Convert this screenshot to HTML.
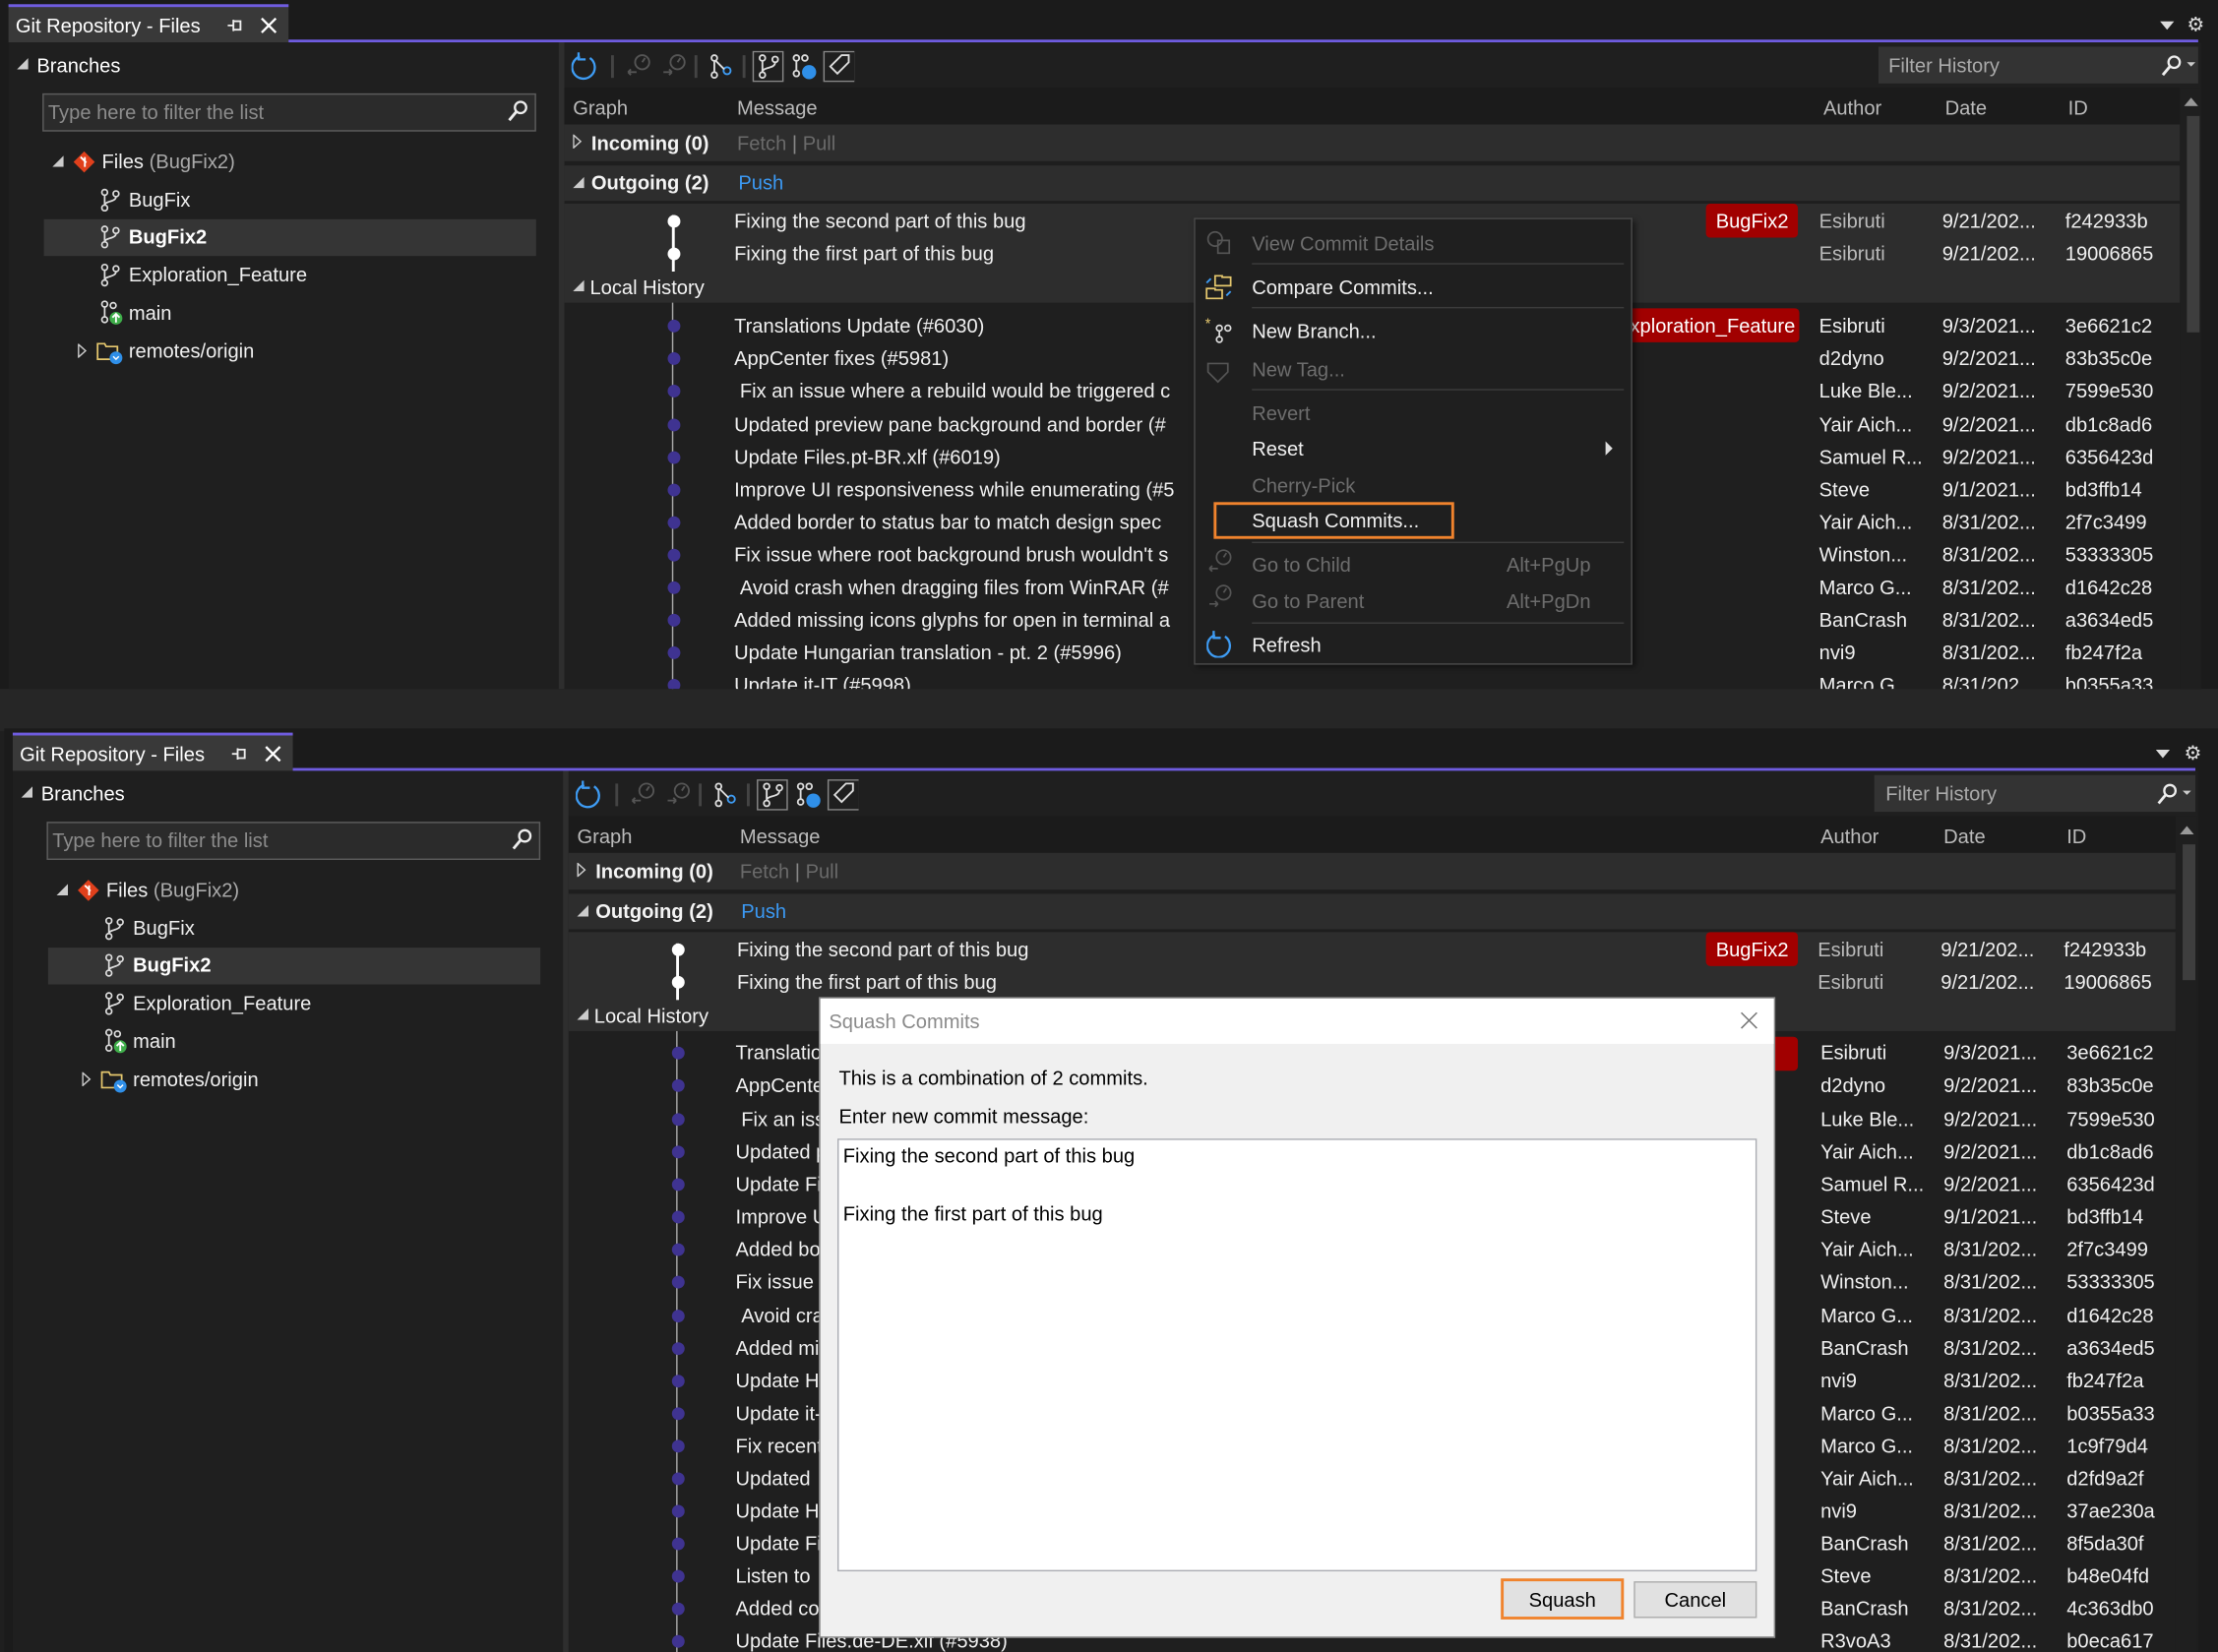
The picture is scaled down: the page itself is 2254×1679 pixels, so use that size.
<!DOCTYPE html>
<html><head><meta charset="utf-8"><style>
*{margin:0;padding:0;box-sizing:border-box}
html,body{width:2254px;height:1678px;overflow:hidden;background:#1f1f1f}
#s{position:absolute;left:0;top:0;width:1568px;height:1168px;transform:scale(1.4375);transform-origin:0 0;font-family:"Liberation Sans",sans-serif;font-size:14px;color:#f0f0f0}
.p{position:absolute;left:0;width:1568px;overflow:hidden;background:#1b1b1b}
.a{position:absolute;white-space:nowrap;line-height:18px}
.bx{position:absolute}
.r{position:absolute;left:0;width:1540px;height:18px}
.r span{position:absolute;white-space:nowrap;line-height:18px;top:0}
.m{left:519px}.au{left:1286px}.d{left:1373px}.i{left:1460px}
.dot{position:absolute;left:472px;width:9px;height:9px;border-radius:50%;background:#3f3391}
.dis{color:#6f6f6f}
svg{position:absolute}
</style></head><body><div id="s">

<div class="bx" style="left:0;top:487px;width:1568px;height:30px;background:#262626"></div>

<!-- ===== TOP PANEL ===== -->
<div class="p" style="top:0;height:487px">
 <div class="bx" style="left:6px;top:3px;width:198px;height:27px;background:#393939;border-top:2px solid #6f5ce0"></div>
 <div class="a" style="left:11px;top:9px;color:#fff">Git Repository - Files</div>
 <svg style="left:160px;top:12px" width="12" height="12" viewBox="0 0 12 12"><path d="M1 6h4M5 2v8M5 3h5v6H5" stroke="#eee" stroke-width="1.3" fill="none"/></svg>
 <svg style="left:184px;top:12px" width="12" height="12" viewBox="0 0 12 12"><path d="M1 1l10 10M11 1L1 11" stroke="#fff" stroke-width="1.6"/></svg>
 <div class="bx" style="left:204px;top:28px;width:1350px;height:2px;background:#6f5ce0"></div>
 <svg style="left:1527px;top:15px" width="10" height="6"><path d="M0 0h10L5 6z" fill="#ddd"/></svg>
 <div class="a" style="left:1546px;top:8px;font-size:14px;color:#ddd">⚙</div>

 <div class="bx" style="left:6px;top:30px;width:389px;height:460px;background:#1f1f1f"></div>
 <div class="bx" style="left:395px;top:30px;width:4px;height:460px;background:#2e2e2e"></div>
 <svg style="left:12px;top:41px" width="8" height="8"><path d="M8 0v8H0z" fill="#ccc"/></svg>
 <div class="a" style="left:26px;top:37px;color:#fff">Branches</div>
 <div class="bx" style="left:30px;top:66px;width:349px;height:27px;background:#2b2b2b;border:1px solid #5c5c5c"></div>
 <div class="a" style="left:34px;top:70px;color:#8c8c8c">Type here to filter the list</div>
 <svg style="left:358px;top:70px" width="16" height="17" viewBox="0 0 16 17"><circle cx="10" cy="6" r="4" stroke="#eee" stroke-width="1.6" fill="none"/><path d="M7 9l-5 6" stroke="#eee" stroke-width="2"/></svg>
 <svg style="left:37px;top:110px" width="8" height="8"><path d="M8 0v8H0z" fill="#ccc"/></svg>
 <svg style="left:51px;top:106px" width="17" height="17" viewBox="0 0 17 17"><path d="M8.5 1l7.5 7.5-7.5 7.5L1 8.5z" fill="#e0401c"/><path d="M6 5l4 4M9 5v7" stroke="#fff" stroke-width="1.3"/></svg>
 <div class="a" style="left:72px;top:105px">Files <span style="color:#aaa">(BugFix2)</span></div>
 <div class="bx" style="left:31px;top:155px;width:348px;height:26px;background:#353535"></div>
 <svg style="left:70px;top:133px" width="16" height="17" viewBox="0 0 16 17"><g stroke="#ddd" stroke-width="1.2" fill="none"><circle cx="4" cy="3" r="2"/><circle cx="4" cy="14" r="2"/><circle cx="12" cy="4" r="2"/><path d="M4 5v7M12 6c0 4-8 3-8 6"/></g></svg>
 <div class="a" style="left:91px;top:132px">BugFix</div>
 <svg style="left:70px;top:159px" width="16" height="17" viewBox="0 0 16 17"><g stroke="#ddd" stroke-width="1.2" fill="none"><circle cx="4" cy="3" r="2"/><circle cx="4" cy="14" r="2"/><circle cx="12" cy="4" r="2"/><path d="M4 5v7M12 6c0 4-8 3-8 6"/></g></svg>
 <div class="a" style="left:91px;top:158px;font-weight:bold;color:#fff">BugFix2</div>
 <svg style="left:70px;top:186px" width="16" height="17" viewBox="0 0 16 17"><g stroke="#ddd" stroke-width="1.2" fill="none"><circle cx="4" cy="3" r="2"/><circle cx="4" cy="14" r="2"/><circle cx="12" cy="4" r="2"/><path d="M4 5v7M12 6c0 4-8 3-8 6"/></g></svg>
 <div class="a" style="left:91px;top:185px">Exploration_Feature</div>
 <svg style="left:70px;top:212px" width="18" height="18" viewBox="0 0 18 18"><g stroke="#ddd" stroke-width="1.2" fill="none"><circle cx="4" cy="3" r="2"/><circle cx="4" cy="14" r="2"/><circle cx="10" cy="4" r="2"/><path d="M4 5v7"/></g><circle cx="12" cy="13" r="4.5" fill="#3fae4a"/><path d="M12 16v-6M9.5 12.5L12 10l2.5 2.5" stroke="#fff" stroke-width="1.3" fill="none"/></svg>
 <div class="a" style="left:91px;top:212px">main</div>
 <svg style="left:55px;top:243px" width="7" height="10"><path d="M0.5 0.5v9l5-4.5z" stroke="#ccc" fill="none"/></svg>
 <svg style="left:68px;top:240px" width="20" height="18" viewBox="0 0 20 18"><path d="M1 3h5l1 2h8v9H1z" stroke="#e6c86e" stroke-width="1.2" fill="none"/><circle cx="14" cy="13" r="4.5" fill="#2f8fe8"/><path d="M12 12l2 2 2-2" stroke="#fff" fill="none"/></svg>
 <div class="a" style="left:91px;top:239px">remotes/origin</div>

 <div class="bx" style="left:399px;top:30px;width:1157px;height:460px;background:#1f1f1f"></div>
 <svg style="left:404px;top:36px" width="200" height="22" viewBox="0 0 200 22">
  <path d="M6 4a8 8 0 1 0 7 1" stroke="#3e9cf4" stroke-width="1.6" fill="none"/><path d="M5 1v5h5" stroke="#3e9cf4" stroke-width="1.6" fill="none"/>
  <path d="M29 3v16" stroke="#444" stroke-width="2"/>
  <g stroke="#555" stroke-width="1.3" fill="none"><circle cx="50" cy="8" r="5"/><path d="M50 8l2-3M40 15h6M40 15l2-2M40 15l2 2"/><circle cx="75" cy="8" r="5"/><path d="M75 8l2-3M65 15h6M71 15l-2-2M71 15l-2 2"/></g>
  <path d="M88 3v16" stroke="#444" stroke-width="2"/>
  <g stroke="#ddd" stroke-width="1.3" fill="none"><circle cx="101" cy="5" r="2"/><circle cx="101" cy="17" r="2"/><circle cx="110" cy="14" r="2.5" stroke="#3e9cf4"/><path d="M101 7v8M102 7l6 6"/></g>
  <path d="M122 3v16" stroke="#444" stroke-width="2"/>
  <rect x="128.5" y="0.5" width="21" height="21" stroke="#888" fill="none"/>
  <g stroke="#ddd" stroke-width="1.3" fill="none"><circle cx="135" cy="5" r="2"/><circle cx="135" cy="17" r="2"/><circle cx="144" cy="6" r="2"/><path d="M135 7v8M144 8c0 5-9 3-9 7"/><circle cx="159" cy="5" r="2"/><circle cx="159" cy="16" r="2"/><circle cx="165" cy="5" r="2"/><path d="M159 7v7"/></g>
  <circle cx="168" cy="15" r="5" fill="#2f8fe8"/>
  <rect x="178.5" y="0.5" width="22" height="21" stroke="#888" fill="none"/>
  <path d="M183 11l8-8h5v5l-8 8z" stroke="#ddd" stroke-width="1.3" fill="none"/>
 </svg>
 <div class="bx" style="left:1328px;top:33px;width:226px;height:26px;background:#333"></div>
 <div class="a" style="left:1335px;top:37px;color:#aaa">Filter History</div>
 <svg style="left:1527px;top:38px" width="26" height="16"><circle cx="10" cy="6" r="4" stroke="#eee" stroke-width="1.6" fill="none"/><path d="M7 9l-5 6" stroke="#eee" stroke-width="2"/><path d="M19 6h6l-3 3z" fill="#ccc"/></svg>

 <div class="bx" style="left:399px;top:62px;width:1142px;height:26px;background:#1b1b1b"></div>
 <div class="a" style="left:405px;top:67px;color:#bbb">Graph</div>
 <div class="a" style="left:521px;top:67px;color:#bbb">Message</div>
 <div class="a" style="left:1289px;top:67px;color:#bbb">Author</div>
 <div class="a" style="left:1375px;top:67px;color:#bbb">Date</div>
 <div class="a" style="left:1462px;top:67px;color:#bbb">ID</div>
 <div class="bx" style="left:399px;top:88px;width:1142px;height:126px;background:#2d2d2d"></div>
 <div class="bx" style="left:399px;top:114px;width:1142px;height:3px;background:#1e1e1e"></div>
 <div class="bx" style="left:399px;top:142px;width:1142px;height:2px;background:#1e1e1e"></div>
 <svg style="left:405px;top:95px" width="7" height="10"><path d="M0.5 0.5v9l5-4.5z" stroke="#ccc" fill="none"/></svg>
 <div class="a" style="left:418px;top:92px;font-weight:bold;color:#f4f4f4">Incoming (0)</div>
 <div class="a" style="left:521px;top:92px;color:#6a6a6a">Fetch <span style="color:#888">|</span> Pull</div>
 <svg style="left:405px;top:125px" width="8" height="8"><path d="M8 0v8H0z" fill="#ccc"/></svg>
 <div class="a" style="left:418px;top:120px;font-weight:bold;color:#f4f4f4">Outgoing (2)</div>
 <div class="a" style="left:522px;top:120px;color:#3b99f3">Push</div>
 <div class="bx" style="left:475px;top:152px;width:2px;height:40px;background:#fff"></div>
 <div class="dot" style="left:472px;top:152px;background:#fff"></div>
 <div class="dot" style="left:472px;top:175px;background:#fff"></div>
 <div class="a" style="left:519px;top:147px">Fixing the second part of this bug</div>
 <div class="a" style="left:519px;top:170px">Fixing the first part of this bug</div>
 <div class="bx" style="left:1206px;top:144px;width:65px;height:24px;background:#a10000;border-radius:3px"></div>
 <div class="a" style="left:1213px;top:147px;color:#fff">BugFix2</div>
 <div class="a" style="left:1286px;top:147px;color:#bbb">Esibruti</div><div class="a" style="left:1373px;top:147px">9/21/202...</div><div class="a" style="left:1460px;top:147px">f242933b</div>
 <div class="a" style="left:1286px;top:170px;color:#bbb">Esibruti</div><div class="a" style="left:1373px;top:170px">9/21/202...</div><div class="a" style="left:1460px;top:170px">19006865</div>
 <svg style="left:405px;top:198px" width="8" height="8"><path d="M8 0v8H0z" fill="#ccc"/></svg>
 <div class="a" style="left:417px;top:194px;color:#f4f4f4">Local History</div>

 <div class="bx" style="left:475px;top:214px;width:1px;height:280px;background:#aaa"></div>
 <div class="bx" style="left:1150px;top:218px;width:122px;height:24px;background:#a10000;border-radius:3px;overflow:hidden"><div class="a" style="left:-7px;top:3px;color:#fff">Exploration_Feature</div></div>

 <div class="r" style="top:221px"><span class="m">Translations Update (#6030)</span><span class="au">Esibruti</span><span class="d">9/3/2021...</span><span class="i">3e6621c2</span></div>
 <div class="r" style="top:244px"><span class="m">AppCenter fixes (#5981)</span><span class="au">d2dyno</span><span class="d">9/2/2021...</span><span class="i">83b35c0e</span></div>
 <div class="r" style="top:267px"><span class="m" style="left:523px">Fix an issue where a rebuild would be triggered c</span><span class="au">Luke Ble...</span><span class="d">9/2/2021...</span><span class="i">7599e530</span></div>
 <div class="r" style="top:291px"><span class="m">Updated preview pane background and border (#</span><span class="au">Yair Aich...</span><span class="d">9/2/2021...</span><span class="i">db1c8ad6</span></div>
 <div class="r" style="top:314px"><span class="m">Update Files.pt-BR.xlf (#6019)</span><span class="au">Samuel R...</span><span class="d">9/2/2021...</span><span class="i">6356423d</span></div>
 <div class="r" style="top:337px"><span class="m">Improve UI responsiveness while enumerating (#5</span><span class="au">Steve</span><span class="d">9/1/2021...</span><span class="i">bd3ffb14</span></div>
 <div class="r" style="top:360px"><span class="m">Added border to status bar to match design spec</span><span class="au">Yair Aich...</span><span class="d">8/31/202...</span><span class="i">2f7c3499</span></div>
 <div class="r" style="top:383px"><span class="m">Fix issue where root background brush wouldn't s</span><span class="au">Winston...</span><span class="d">8/31/202...</span><span class="i">53333305</span></div>
 <div class="r" style="top:406px"><span class="m" style="left:523px">Avoid crash when dragging files from WinRAR (#</span><span class="au">Marco G...</span><span class="d">8/31/202...</span><span class="i">d1642c28</span></div>
 <div class="r" style="top:429px"><span class="m">Added missing icons glyphs for open in terminal a</span><span class="au">BanCrash</span><span class="d">8/31/202...</span><span class="i">a3634ed5</span></div>
 <div class="r" style="top:452px"><span class="m">Update Hungarian translation - pt. 2 (#5996)</span><span class="au">nvi9</span><span class="d">8/31/202...</span><span class="i">fb247f2a</span></div>
 <div class="r" style="top:475px"><span class="m">Update it-IT (#5998)</span><span class="au">Marco G...</span><span class="d">8/31/202...</span><span class="i">b0355a33</span></div>
 <div class="dot" style="top:226px"></div><div class="dot" style="top:249px"></div><div class="dot" style="top:272px"></div><div class="dot" style="top:296px"></div><div class="dot" style="top:319px"></div><div class="dot" style="top:342px"></div><div class="dot" style="top:365px"></div><div class="dot" style="top:388px"></div><div class="dot" style="top:411px"></div><div class="dot" style="top:434px"></div><div class="dot" style="top:457px"></div><div class="dot" style="top:480px"></div>

 <div class="bx" style="left:1541px;top:62px;width:15px;height:430px;background:#1f1f1f"></div>
 <svg style="left:1544px;top:69px" width="10" height="6"><path d="M0 6h10L5 0z" fill="#999"/></svg>
 <div class="bx" style="left:1546px;top:82px;width:9px;height:153px;background:#3e3e3e"></div>
</div>

<!-- ===== BOTTOM PANEL ===== -->
<div class="p" style="top:515px;height:653px;left:3px">
 <div class="bx" style="left:6px;top:3px;width:198px;height:27px;background:#393939;border-top:2px solid #6f5ce0"></div>
 <div class="a" style="left:11px;top:9px;color:#fff">Git Repository - Files</div>
 <svg style="left:160px;top:12px" width="12" height="12" viewBox="0 0 12 12"><path d="M1 6h4M5 2v8M5 3h5v6H5" stroke="#eee" stroke-width="1.3" fill="none"/></svg>
 <svg style="left:184px;top:12px" width="12" height="12" viewBox="0 0 12 12"><path d="M1 1l10 10M11 1L1 11" stroke="#fff" stroke-width="1.6"/></svg>
 <div class="bx" style="left:204px;top:28px;width:1345px;height:2px;background:#6f5ce0"></div>
 <svg style="left:1521px;top:15px" width="10" height="6"><path d="M0 0h10L5 6z" fill="#ddd"/></svg>
 <div class="a" style="left:1541px;top:8px;color:#ddd">⚙</div>

 <div class="bx" style="left:6px;top:30px;width:389px;height:630px;background:#1f1f1f"></div>
 <div class="bx" style="left:395px;top:30px;width:4px;height:630px;background:#2e2e2e"></div>
 <svg style="left:12px;top:41px" width="8" height="8"><path d="M8 0v8H0z" fill="#ccc"/></svg>
 <div class="a" style="left:26px;top:37px;color:#fff">Branches</div>
 <div class="bx" style="left:30px;top:66px;width:349px;height:27px;background:#2b2b2b;border:1px solid #5c5c5c"></div>
 <div class="a" style="left:34px;top:70px;color:#8c8c8c">Type here to filter the list</div>
 <svg style="left:358px;top:70px" width="16" height="17" viewBox="0 0 16 17"><circle cx="10" cy="6" r="4" stroke="#eee" stroke-width="1.6" fill="none"/><path d="M7 9l-5 6" stroke="#eee" stroke-width="2"/></svg>
 <svg style="left:37px;top:110px" width="8" height="8"><path d="M8 0v8H0z" fill="#ccc"/></svg>
 <svg style="left:51px;top:106px" width="17" height="17" viewBox="0 0 17 17"><path d="M8.5 1l7.5 7.5-7.5 7.5L1 8.5z" fill="#e0401c"/><path d="M6 5l4 4M9 5v7" stroke="#fff" stroke-width="1.3"/></svg>
 <div class="a" style="left:72px;top:105px">Files <span style="color:#aaa">(BugFix2)</span></div>
 <div class="bx" style="left:31px;top:155px;width:348px;height:26px;background:#353535"></div>
 <svg style="left:70px;top:133px" width="16" height="17" viewBox="0 0 16 17"><g stroke="#ddd" stroke-width="1.2" fill="none"><circle cx="4" cy="3" r="2"/><circle cx="4" cy="14" r="2"/><circle cx="12" cy="4" r="2"/><path d="M4 5v7M12 6c0 4-8 3-8 6"/></g></svg>
 <div class="a" style="left:91px;top:132px">BugFix</div>
 <svg style="left:70px;top:159px" width="16" height="17" viewBox="0 0 16 17"><g stroke="#ddd" stroke-width="1.2" fill="none"><circle cx="4" cy="3" r="2"/><circle cx="4" cy="14" r="2"/><circle cx="12" cy="4" r="2"/><path d="M4 5v7M12 6c0 4-8 3-8 6"/></g></svg>
 <div class="a" style="left:91px;top:158px;font-weight:bold;color:#fff">BugFix2</div>
 <svg style="left:70px;top:186px" width="16" height="17" viewBox="0 0 16 17"><g stroke="#ddd" stroke-width="1.2" fill="none"><circle cx="4" cy="3" r="2"/><circle cx="4" cy="14" r="2"/><circle cx="12" cy="4" r="2"/><path d="M4 5v7M12 6c0 4-8 3-8 6"/></g></svg>
 <div class="a" style="left:91px;top:185px">Exploration_Feature</div>
 <svg style="left:70px;top:212px" width="18" height="18" viewBox="0 0 18 18"><g stroke="#ddd" stroke-width="1.2" fill="none"><circle cx="4" cy="3" r="2"/><circle cx="4" cy="14" r="2"/><circle cx="10" cy="4" r="2"/><path d="M4 5v7"/></g><circle cx="12" cy="13" r="4.5" fill="#3fae4a"/><path d="M12 16v-6M9.5 12.5L12 10l2.5 2.5" stroke="#fff" stroke-width="1.3" fill="none"/></svg>
 <div class="a" style="left:91px;top:212px">main</div>
 <svg style="left:55px;top:243px" width="7" height="10"><path d="M0.5 0.5v9l5-4.5z" stroke="#ccc" fill="none"/></svg>
 <svg style="left:68px;top:240px" width="20" height="18" viewBox="0 0 20 18"><path d="M1 3h5l1 2h8v9H1z" stroke="#e6c86e" stroke-width="1.2" fill="none"/><circle cx="14" cy="13" r="4.5" fill="#2f8fe8"/><path d="M12 12l2 2 2-2" stroke="#fff" fill="none"/></svg>
 <div class="a" style="left:91px;top:239px">remotes/origin</div>

 <div class="bx" style="left:399px;top:30px;width:1152px;height:630px;background:#1f1f1f"></div>
 <svg style="left:404px;top:36px" width="200" height="22" viewBox="0 0 200 22">
  <path d="M6 4a8 8 0 1 0 7 1" stroke="#3e9cf4" stroke-width="1.6" fill="none"/><path d="M5 1v5h5" stroke="#3e9cf4" stroke-width="1.6" fill="none"/>
  <path d="M29 3v16" stroke="#444" stroke-width="2"/>
  <g stroke="#555" stroke-width="1.3" fill="none"><circle cx="50" cy="8" r="5"/><path d="M50 8l2-3M40 15h6M40 15l2-2M40 15l2 2"/><circle cx="75" cy="8" r="5"/><path d="M75 8l2-3M65 15h6M71 15l-2-2M71 15l-2 2"/></g>
  <path d="M88 3v16" stroke="#444" stroke-width="2"/>
  <g stroke="#ddd" stroke-width="1.3" fill="none"><circle cx="101" cy="5" r="2"/><circle cx="101" cy="17" r="2"/><circle cx="110" cy="14" r="2.5" stroke="#3e9cf4"/><path d="M101 7v8M102 7l6 6"/></g>
  <path d="M122 3v16" stroke="#444" stroke-width="2"/>
  <rect x="128.5" y="0.5" width="21" height="21" stroke="#888" fill="none"/>
  <g stroke="#ddd" stroke-width="1.3" fill="none"><circle cx="135" cy="5" r="2"/><circle cx="135" cy="17" r="2"/><circle cx="144" cy="6" r="2"/><path d="M135 7v8M144 8c0 5-9 3-9 7"/><circle cx="159" cy="5" r="2"/><circle cx="159" cy="16" r="2"/><circle cx="165" cy="5" r="2"/><path d="M159 7v7"/></g>
  <circle cx="168" cy="15" r="5" fill="#2f8fe8"/>
  <rect x="178.5" y="0.5" width="22" height="21" stroke="#888" fill="none"/>
  <path d="M183 11l8-8h5v5l-8 8z" stroke="#ddd" stroke-width="1.3" fill="none"/>
 </svg>
 <div class="bx" style="left:1322px;top:33px;width:227px;height:26px;background:#333"></div>
 <div class="a" style="left:1330px;top:37px;color:#aaa">Filter History</div>
 <svg style="left:1521px;top:38px" width="26" height="16"><circle cx="10" cy="6" r="4" stroke="#eee" stroke-width="1.6" fill="none"/><path d="M7 9l-5 6" stroke="#eee" stroke-width="2"/><path d="M19 6h6l-3 3z" fill="#ccc"/></svg>

 <div class="bx" style="left:399px;top:62px;width:1136px;height:26px;background:#1b1b1b"></div>
 <div class="a" style="left:405px;top:67px;color:#bbb">Graph</div>
 <div class="a" style="left:520px;top:67px;color:#bbb">Message</div>
 <div class="a" style="left:1284px;top:67px;color:#bbb">Author</div>
 <div class="a" style="left:1371px;top:67px;color:#bbb">Date</div>
 <div class="a" style="left:1458px;top:67px;color:#bbb">ID</div>
 <div class="bx" style="left:399px;top:88px;width:1136px;height:126px;background:#2d2d2d"></div>
 <div class="bx" style="left:399px;top:114px;width:1136px;height:3px;background:#1e1e1e"></div>
 <div class="bx" style="left:399px;top:142px;width:1136px;height:2px;background:#1e1e1e"></div>
 <svg style="left:405px;top:95px" width="7" height="10"><path d="M0.5 0.5v9l5-4.5z" stroke="#ccc" fill="none"/></svg>
 <div class="a" style="left:418px;top:92px;font-weight:bold;color:#f4f4f4">Incoming (0)</div>
 <div class="a" style="left:520px;top:92px;color:#6a6a6a">Fetch <span style="color:#888">|</span> Pull</div>
 <svg style="left:405px;top:125px" width="8" height="8"><path d="M8 0v8H0z" fill="#ccc"/></svg>
 <div class="a" style="left:418px;top:120px;font-weight:bold;color:#f4f4f4">Outgoing (2)</div>
 <div class="a" style="left:521px;top:120px;color:#3b99f3">Push</div>
 <div class="bx" style="left:475px;top:152px;width:2px;height:40px;background:#fff"></div>
 <div class="dot" style="left:472px;top:152px;background:#fff"></div>
 <div class="dot" style="left:472px;top:175px;background:#fff"></div>
 <div class="a" style="left:518px;top:147px">Fixing the second part of this bug</div>
 <div class="a" style="left:518px;top:170px">Fixing the first part of this bug</div>
 <div class="bx" style="left:1203px;top:144px;width:65px;height:24px;background:#a10000;border-radius:3px"></div>
 <div class="a" style="left:1210px;top:147px;color:#fff">BugFix2</div>
 <div class="a" style="left:1282px;top:147px;color:#bbb">Esibruti</div><div class="a" style="left:1369px;top:147px">9/21/202...</div><div class="a" style="left:1456px;top:147px">f242933b</div>
 <div class="a" style="left:1282px;top:170px;color:#bbb">Esibruti</div><div class="a" style="left:1369px;top:170px">9/21/202...</div><div class="a" style="left:1456px;top:170px">19006865</div>
 <svg style="left:405px;top:198px" width="8" height="8"><path d="M8 0v8H0z" fill="#ccc"/></svg>
 <div class="a" style="left:417px;top:194px;color:#f4f4f4">Local History</div>
 <div class="bx" style="left:475px;top:214px;width:1px;height:440px;background:#aaa"></div>
 <div class="bx" style="left:1150px;top:218px;width:118px;height:24px;background:#a10000;border-radius:3px"></div>
 <div style="position:absolute;left:0;top:0;width:1540px;height:660px;transform:translateX(-2px)">
 <div class="r" style="top:220px"><span class="m">Translations Update (#6030)</span><span class="au">Esibruti</span><span class="d">9/3/2021...</span><span class="i">3e6621c2</span></div>
 <div class="r" style="top:243px"><span class="m">AppCenter fixes (#5981)</span><span class="au">d2dyno</span><span class="d">9/2/2021...</span><span class="i">83b35c0e</span></div>
 <div class="r" style="top:267px"><span class="m" style="left:523px">Fix an issue where a rebuild</span><span class="au">Luke Ble...</span><span class="d">9/2/2021...</span><span class="i">7599e530</span></div>
 <div class="r" style="top:290px"><span class="m">Updated preview pane</span><span class="au">Yair Aich...</span><span class="d">9/2/2021...</span><span class="i">db1c8ad6</span></div>
 <div class="r" style="top:313px"><span class="m">Update Files.pt-BR.xlf</span><span class="au">Samuel R...</span><span class="d">9/2/2021...</span><span class="i">6356423d</span></div>
 <div class="r" style="top:336px"><span class="m">Improve UI</span><span class="au">Steve</span><span class="d">9/1/2021...</span><span class="i">bd3ffb14</span></div>
 <div class="r" style="top:359px"><span class="m">Added border</span><span class="au">Yair Aich...</span><span class="d">8/31/202...</span><span class="i">2f7c3499</span></div>
 <div class="r" style="top:382px"><span class="m">Fix issue where</span><span class="au">Winston...</span><span class="d">8/31/202...</span><span class="i">53333305</span></div>
 <div class="r" style="top:406px"><span class="m" style="left:523px">Avoid crash</span><span class="au">Marco G...</span><span class="d">8/31/202...</span><span class="i">d1642c28</span></div>
 <div class="r" style="top:429px"><span class="m">Added missing</span><span class="au">BanCrash</span><span class="d">8/31/202...</span><span class="i">a3634ed5</span></div>
 <div class="r" style="top:452px"><span class="m">Update Hungarian</span><span class="au">nvi9</span><span class="d">8/31/202...</span><span class="i">fb247f2a</span></div>
 <div class="r" style="top:475px"><span class="m">Update it-IT</span><span class="au">Marco G...</span><span class="d">8/31/202...</span><span class="i">b0355a33</span></div>
 <div class="r" style="top:498px"><span class="m">Fix recent</span><span class="au">Marco G...</span><span class="d">8/31/202...</span><span class="i">1c9f79d4</span></div>
 <div class="r" style="top:521px"><span class="m">Updated</span><span class="au">Yair Aich...</span><span class="d">8/31/202...</span><span class="i">d2fd9a2f</span></div>
 <div class="r" style="top:544px"><span class="m">Update Hungarian</span><span class="au">nvi9</span><span class="d">8/31/202...</span><span class="i">37ae230a</span></div>
 <div class="r" style="top:567px"><span class="m">Update Files</span><span class="au">BanCrash</span><span class="d">8/31/202...</span><span class="i">8f5da30f</span></div>
 <div class="r" style="top:590px"><span class="m">Listen to</span><span class="au">Steve</span><span class="d">8/31/202...</span><span class="i">b48e04fd</span></div>
 <div class="r" style="top:613px"><span class="m">Added column</span><span class="au">BanCrash</span><span class="d">8/31/202...</span><span class="i">4c363db0</span></div>
 <div class="r" style="top:636px"><span class="m">Update Files.de-DE.xlf (#5938)</span><span class="au">R3voA3</span><span class="d">8/31/202...</span><span class="i">b0eca617</span></div>
 </div>
 <div class="dot" style="top:225px"></div><div class="dot" style="top:248px"></div><div class="dot" style="top:272px"></div><div class="dot" style="top:295px"></div><div class="dot" style="top:318px"></div><div class="dot" style="top:341px"></div><div class="dot" style="top:364px"></div><div class="dot" style="top:387px"></div><div class="dot" style="top:411px"></div><div class="dot" style="top:434px"></div><div class="dot" style="top:457px"></div><div class="dot" style="top:480px"></div><div class="dot" style="top:503px"></div><div class="dot" style="top:526px"></div><div class="dot" style="top:549px"></div><div class="dot" style="top:572px"></div><div class="dot" style="top:595px"></div><div class="dot" style="top:618px"></div><div class="dot" style="top:641px"></div>
 <div class="bx" style="left:1535px;top:62px;width:15px;height:600px;background:#1f1f1f"></div>
 <svg style="left:1538px;top:69px" width="10" height="6"><path d="M0 6h10L5 0z" fill="#999"/></svg>
 <div class="bx" style="left:1540px;top:82px;width:9px;height:96px;background:#3e3e3e"></div>
</div>

<!-- ===== CONTEXT MENU ===== -->
<div class="bx" style="left:844px;top:154px;width:310px;height:316px;background:#1f1f1f;border:1px solid #4a4a4a;box-shadow:2px 2px 4px rgba(0,0,0,.5)">
 <div class="bx" style="left:40px;top:31px;width:263px;height:1px;background:#3c3c3c"></div>
 <div class="bx" style="left:40px;top:62px;width:263px;height:1px;background:#3c3c3c"></div>
 <div class="bx" style="left:40px;top:120px;width:263px;height:1px;background:#3c3c3c"></div>
 <div class="bx" style="left:40px;top:228px;width:263px;height:1px;background:#3c3c3c"></div>
 <div class="bx" style="left:40px;top:285px;width:263px;height:1px;background:#3c3c3c"></div>
 <div class="bx" style="left:13px;top:200px;width:170px;height:26px;border:2px solid #f0832d"></div>
 <svg style="left:7px;top:7px" width="20" height="20"><g stroke="#555" stroke-width="1.2" fill="none"><circle cx="7" cy="7" r="5"/><path d="M9 8h8v9H9z"/></g></svg>
 <svg style="left:7px;top:38px" width="20" height="20"><g stroke="#e6c86e" stroke-width="1.2" fill="none"><path d="M7 2h5v1h6v6H7zM1 11h6v1h5v6H1z"/></g><path d="M1 7l3-3M18 13l-3 3" stroke="#3e9cf4" stroke-width="1.3"/></svg>
 <svg style="left:7px;top:68px" width="20" height="22"><text x="0" y="9" font-size="10" fill="#e6c86e">*</text><g stroke="#ddd" stroke-width="1.2" fill="none"><circle cx="10" cy="17" r="2"/><circle cx="10" cy="9" r="2"/><circle cx="16" cy="9" r="2"/><path d="M10 11v4"/></g></svg>
 <svg style="left:7px;top:95px" width="20" height="22"><g stroke="#555" stroke-width="1.2" fill="none"><path d="M2 7h14v6l-7 7-7-7z"/></g></svg>
 <div class="a" style="left:40px;top:8px;color:#6d6d6d">View Commit Details</div>
 <div class="a" style="left:40px;top:39px">Compare Commits...</div>
 <div class="a" style="left:40px;top:70px">New Branch...</div>
 <div class="a" style="left:40px;top:97px;color:#6d6d6d">New Tag...</div>
 <div class="a" style="left:40px;top:128px;color:#6d6d6d">Revert</div>
 <div class="a" style="left:40px;top:153px">Reset</div>
 <svg style="left:290px;top:157px" width="6" height="10"><path d="M0 0v10l5-5z" fill="#ddd"/></svg>
 <div class="a" style="left:40px;top:179px;color:#6d6d6d">Cherry-Pick</div>
 <div class="a" style="left:40px;top:204px">Squash Commits...</div>
 <svg style="left:8px;top:232px" width="20" height="20"><g stroke="#555" stroke-width="1.2" fill="none"><circle cx="12" cy="7" r="5"/><path d="M12 7l2-3M2 15h6M2 15l2-2M2 15l2 2"/></g></svg>
 <svg style="left:8px;top:257px" width="20" height="20"><g stroke="#555" stroke-width="1.2" fill="none"><circle cx="12" cy="7" r="5"/><path d="M12 7l2-3M2 15h6M8 15l-2-2M8 15l-2 2"/></g></svg>
 <div class="a" style="left:40px;top:235px;color:#6d6d6d">Go to Child</div>
 <div class="a" style="left:220px;top:235px;color:#6d6d6d">Alt+PgUp</div>
 <div class="a" style="left:40px;top:261px;color:#6d6d6d">Go to Parent</div>
 <div class="a" style="left:220px;top:261px;color:#6d6d6d">Alt+PgDn</div>
 <svg style="left:8px;top:290px" width="20" height="20"><path d="M6 4a8 8 0 1 0 7 1" stroke="#3e9cf4" stroke-width="1.6" fill="none"/><path d="M5 1v5h5" stroke="#3e9cf4" stroke-width="1.6" fill="none"/></svg>
 <div class="a" style="left:40px;top:292px">Refresh</div>
</div>

<!-- ===== DIALOG ===== -->
<div class="bx" style="left:579px;top:705px;width:676px;height:453px;background:#f0f0f0;border:1px solid #888;color:#000">
 <div class="bx" style="left:0;top:0;width:674px;height:32px;background:#fff"></div>
 <div class="a" style="left:6px;top:7px;color:#8a8a8a">Squash Commits</div>
 <svg style="left:650px;top:9px" width="13" height="13"><path d="M1 1l11 11M12 1L1 12" stroke="#777" stroke-width="1.1"/></svg>
 <div class="a" style="left:13px;top:47px">This is a combination of 2 commits.</div>
 <div class="a" style="left:13px;top:74px">Enter new commit message:</div>
 <div class="bx" style="left:12px;top:99px;width:650px;height:306px;background:#fff;border:1px solid #abadb3"></div>
 <div class="a" style="left:16px;top:102px">Fixing the second part of this bug</div>
 <div class="a" style="left:16px;top:143px">Fixing the first part of this bug</div>
 <div class="bx" style="left:481px;top:410px;width:87px;height:29px;background:#e1e1e1;border:2px solid #f0832d"></div>
 <div class="a" style="left:481px;top:416px;width:87px;text-align:center">Squash</div>
 <div class="bx" style="left:575px;top:412px;width:87px;height:26px;background:#e1e1e1;border:1px solid #adadad"></div>
 <div class="a" style="left:575px;top:416px;width:87px;text-align:center">Cancel</div>
</div>

</div></body></html>
